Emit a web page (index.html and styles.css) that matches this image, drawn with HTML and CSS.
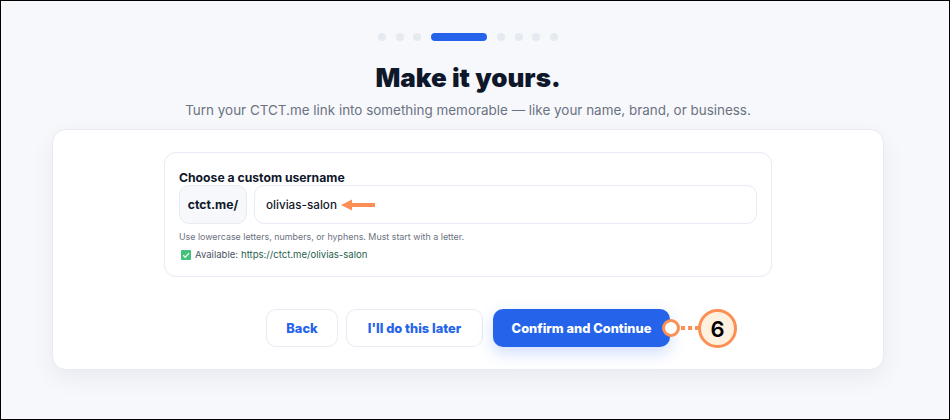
FILE: index.html
```html
<!DOCTYPE html>
<html lang="en">
<head>
    <meta charset="UTF-8">
    <title>Make it yours</title>
    <link rel="stylesheet" href="styles.css">
</head>
<body>
    <div class="page">
        <div class="steps">
            <span class="dot"></span>
            <span class="dot"></span>
            <span class="dot"></span>
            <span class="pill"></span>
            <span class="dot"></span>
            <span class="dot"></span>
            <span class="dot"></span>
            <span class="dot"></span>
        </div>

        <h1 class="title">Make it yours.</h1>
        <p class="subtitle">Turn your CTCT.me link into something memorable — like your name, brand, or business.</p>

        <div class="card">
            <div class="field-box">
                <div class="field-label">Choose a custom username</div>
                <div class="field-row">
                    <div class="prefix">ctct.me/</div>
                    <div class="input">
                        olivias-salon
                        <!-- orange arrow callout -->
                        <svg class="arrow" width="34" height="12" viewBox="0 0 34 12">
                            <path d="M0 6 L11 0.5 L11 4 L34 4 L34 8 L11 8 L11 11.5 Z" fill="#fb8f54"/>
                        </svg>
                    </div>
                </div>
                <p class="hint">Use lowercase letters, numbers, or hyphens. Must start with a letter.</p>
                <p class="available">
                    <svg class="check" width="10" height="10" viewBox="0 0 10 10">
                        <rect width="10" height="10" rx="1" fill="#44c27c"/>
                        <path d="M2.2 5.2 L4.2 7.2 L8 3.2" fill="none" stroke="#e8f8ee" stroke-width="1.3"/>
                    </svg>
                    Available: <span class="link">https://ctct.me/olivias-salon</span>
                </p>
            </div>

            <div class="actions">
                <a class="btn btn-light">Back</a>
                <a class="btn btn-light btn-later">I'll do this later</a>
                <a class="btn btn-primary">
                    Confirm and Continue
                    <span class="marker"></span>
                    <span class="leader"></span>
                    <span class="badge">6</span>
                </a>
            </div>
        </div>
    </div>
</body>
</html>
```

FILE: styles.css
```css
*{
    box-sizing: border-box;
    margin: 0;
    padding: 0;
}

body{
    font-family: Inter, "Liberation Sans", sans-serif;
    background: #f7f8fc;
}

.page{
    width: 950px;
    height: 420px;
    border: 1px solid #000;
    padding: 32px 65px 0 51px;
    display: flex;
    flex-direction: column;
    align-items: center;
    overflow: hidden;
}

.steps{
    display: flex;
    align-items: center;
    gap: 9.75px;
    height: 8px;
}

.dot{
    width: 8px;
    height: 8px;
    border-radius: 50%;
    background: #e5e9f0;
}

.pill{
    width: 56px;
    height: 8px;
    border-radius: 4px;
    background: #2563eb;
}

.title{
    margin-top: 20px;
    font-size: 26px;
    line-height: 34px;
    font-weight: 900;
    color: #0f172a;
}

.subtitle{
    margin-top: 5px;
    font-size: 13.45px;
    line-height: 20px;
    color: #6b7280;
}

.card{
    margin-top: 9px;
    width: 832px;
    height: 241px;
    padding: 22px 111px 0;
    background: #fff;
    border: 1px solid #e8ebf3;
    border-radius: 14px;
    box-shadow: 0 8px 24px rgba(15, 23, 42, 0.06);
}

.field-box{
    height: 125px;
    padding: 17px 14px 0;
    border: 1px solid #e8ebf3;
    border-radius: 12px;
}

.field-label{
    font-size: 12.2px;
    line-height: 15px;
    font-weight: 700;
    color: #0f172a;
}

.field-row{
    display: flex;
    gap: 7px;
}

.prefix{
    width: 68px;
    height: 39px;
    display: flex;
    align-items: center;
    justify-content: center;
    font-size: 12.2px;
    font-weight: 700;
    color: #0f172a;
    background: #f7f8fc;
    border: 1px solid #e8ebf3;
    border-radius: 10px;
}

.input{
    position: relative;
    flex: 1;
    height: 39px;
    display: flex;
    align-items: center;
    padding-left: 11px;
    font-size: 11.7px;
    font-weight: 500;
    color: #0f172a;
    background: #fff;
    border: 1px solid #e8ebf3;
    border-radius: 10px;
}

.arrow{
    position: absolute;
    left: 86px;
    top: 13px;
}

.hint{
    margin-top: 7px;
    font-size: 8.9px;
    line-height: 12px;
    color: #6b7280;
}

.available{
    margin-top: 6px;
    display: flex;
    align-items: center;
    font-size: 9.55px;
    line-height: 12px;
    color: #4b5563;
    gap: 1px;
}

.check{
    margin: 0 3px 0 2px;
}

.link{
    margin-left: 2px;
    color: #1f5f4e;
}

.actions{
    margin-top: 32px;
    display: flex;
    justify-content: center;
    gap: 8px;
}

.btn{
    height: 38px;
    display: flex;
    align-items: center;
    justify-content: center;
    font-size: 12.85px;
    font-weight: 800;
    border-radius: 10px;
}

.btn-light{
    width: 72px;
    color: #2563eb;
    background: #fff;
    border: 1px solid #e8ebf3;
}

.btn-later{
    width: 137px;
}

.btn-primary{
    position: relative;
    width: 177px;
    margin-left: 2px;
    color: #fff;
    background: #2563eb;
    box-shadow: 0 6px 16px rgba(37, 99, 235, 0.22);
}

/* step 6 callout, sits over the button edge */
.marker{
    position: absolute;
    left: 169px;
    top: 10px;
    width: 18px;
    height: 18px;
    border-radius: 50%;
    background: #fff;
    border: 3px solid #fb8f54;
}

.leader{
    position: absolute;
    left: 188px;
    top: 17px;
    width: 18px;
    height: 4px;
    background: repeating-linear-gradient(to right, #fb8f54 0 4px, transparent 4px 7px);
}

.badge{
    position: absolute;
    left: 205px;
    top: 0;
    width: 39px;
    height: 39px;
    display: flex;
    align-items: center;
    justify-content: center;
    font-size: 22px;
    font-weight: 600;
    color: #000;
    background: #fff1df;
    border: 3px solid #fb8f54;
    border-radius: 50%;
}
```
